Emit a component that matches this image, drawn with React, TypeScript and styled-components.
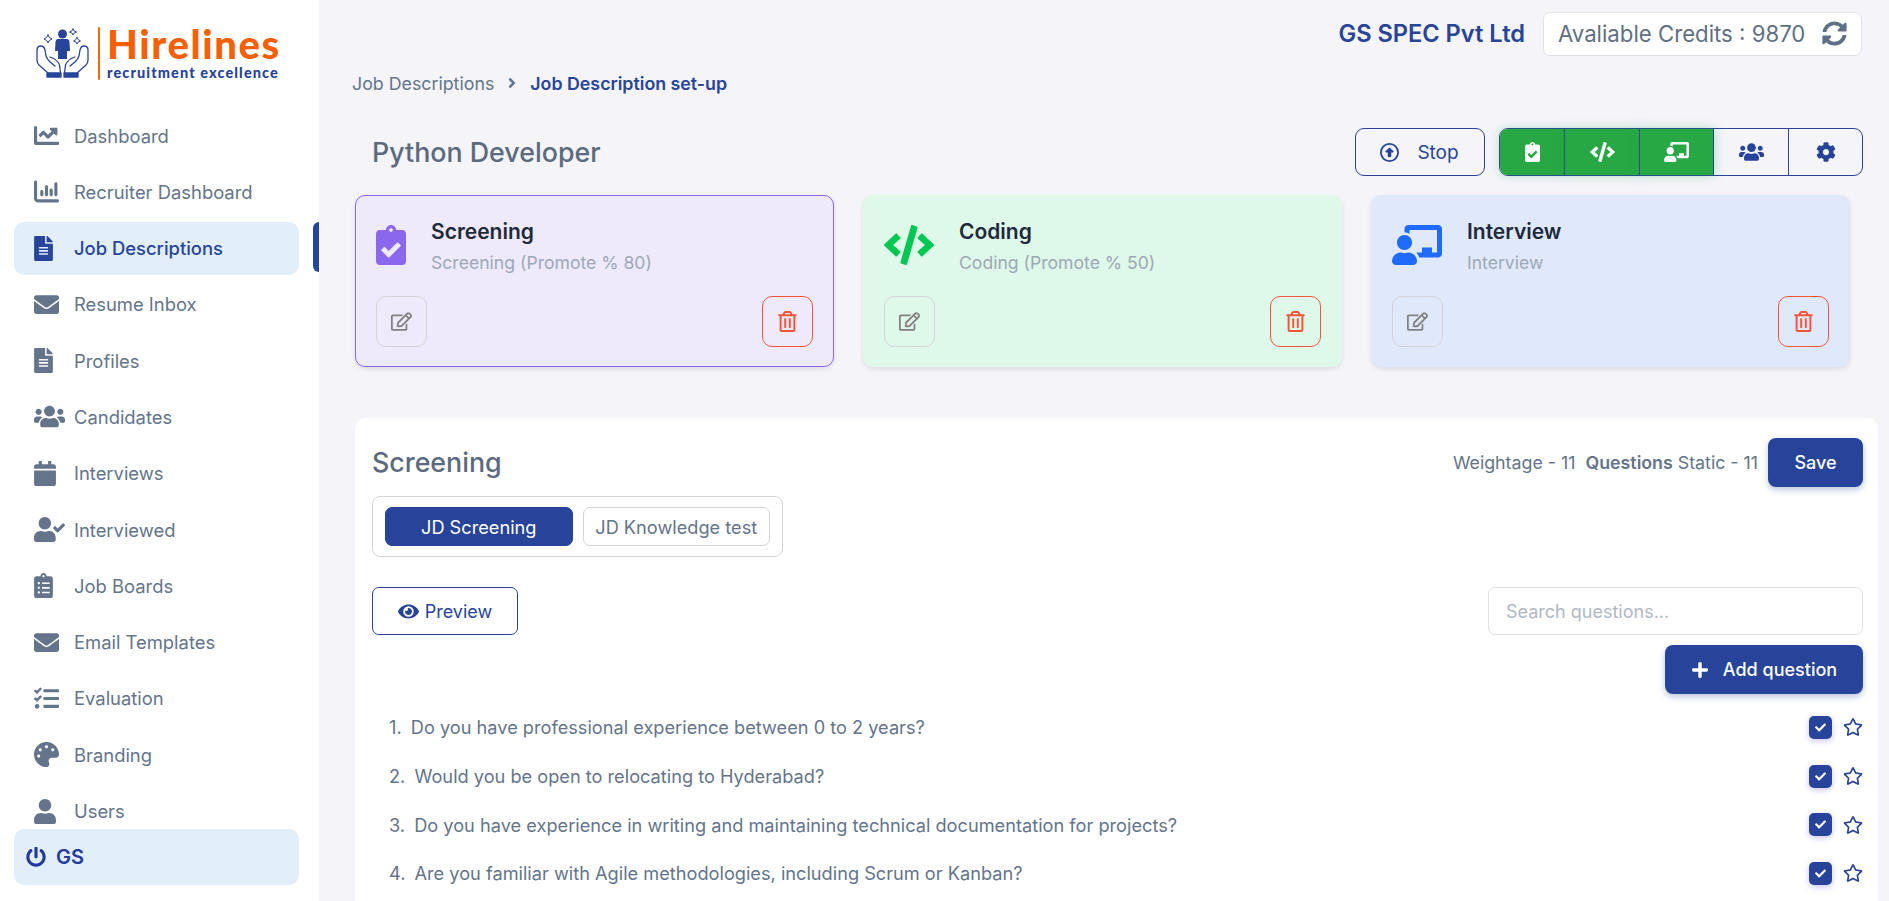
import React from "react";
import styled, { createGlobalStyle } from "styled-components";
import {
  FaChartLine, FaFileAlt, FaEnvelope, FaUsers, FaCalendar, FaUserCheck,
  FaClipboardList, FaTasks, FaPalette, FaUser, FaPowerOff, FaClipboardCheck, FaCode,
  FaChalkboardTeacher, FaCog, FaSyncAlt, FaEye, FaPlus, FaRegEdit, FaRegTrashAlt,
  FaRegStar, FaCheck, FaAngleRight,
} from "react-icons/fa";
import { FaChartColumn, FaRegCircleUp } from "react-icons/fa6";

const navy = "#27449a";
const slate = "#64748b";

const Global = createGlobalStyle`
  html, body { margin: 0; padding: 0; height: 100%; overflow: hidden; background: #f4f4f9; }
  * { box-sizing: border-box; }
  body { font-family: Inter, "Liberation Sans", sans-serif; color: ${slate}; }
  #root { height: 100%; }
`;

const Shell = styled.div`display: flex; height: 100vh; overflow: hidden;`;

const Sidebar = styled.aside`
  position: relative; width: 319px; flex: none; background: #fff;
  display: flex; flex-direction: column; padding-bottom: 16px;
`;
const LogoWrap = styled.div`
  height: 109px; flex: none; display: flex; align-items: flex-start; gap: 7px; padding: 24px 0 0 36px;
`;
const LogoRule = styled.div`width: 2px; height: 53px; margin: 3px 0 0 1px; background: #f76707; border-radius: 1px;`;
const LogoText = styled.div`display: flex; flex-direction: column; width: 174px;`;
const LogoName = styled.span`
  font-family: Lato, sans-serif; font-weight: 900; font-size: 40px; line-height: 40px; color: #f75f07; letter-spacing: 1.6px; white-space: nowrap;
`;
const LogoTag = styled.span`
  margin-top: 2px; font-family: Lato, sans-serif; font-weight: 900; font-size: 14.5px; line-height: 14px; color: ${navy}; letter-spacing: 1.1px; white-space: nowrap;
`;
const Nav = styled.nav`flex: 1; min-height: 0; overflow: hidden; display: flex; flex-direction: column; gap: 3.3px;`;
const NavItem = styled.a<{ $active?: boolean }>`
  flex: none; height: 53px; margin: 0 20px 0 14px; padding-left: 20px; border-radius: 10px;
  display: flex; align-items: center; font-size: 18.4px;
  color: ${(p) => (p.$active ? navy : slate)};
  font-weight: ${(p) => (p.$active ? 500 : 400)};
  background: ${(p) => (p.$active ? "#e2eefa" : "transparent")};
`;
const NavIconBox = styled.span<{ $w: number }>`
  width: 40px; flex: none; display: flex; align-items: center;
  svg { height: 25px; width: ${(p) => p.$w}px; flex: none; }
`;
const ActiveMark = styled.span`
  position: absolute; right: 0; top: 222px; width: 6px; height: 50px; background: ${navy}; border-radius: 6px 0 0 6px;
`;
const UserBox = styled.div`
  flex: none; height: 56px; margin: 0 20px 0 14px; padding-left: 12px; border-radius: 10px; background: #e2eefa;
  display: flex; align-items: center; gap: 10px; color: #2239a0; font-weight: 600; font-size: 20px;
  svg { width: 20px; height: 20px; }
`;

const Main = styled.main`flex: 1; min-width: 0; padding: 11px 11px 0 36px; display: flex; flex-direction: column;`;
const TopBar = styled.div`display: flex; justify-content: flex-end; align-items: center; gap: 18px; padding-right: 16px; height: 45px;`;
const Company = styled.span`font-size: 23.6px; font-weight: 600; color: ${navy};`;
const Credits = styled.div`
  width: 319px; height: 44px; padding: 0 14px; background: #fff; border: 1px solid #dfe2e8; border-radius: 7px;
  display: flex; align-items: center; justify-content: space-between; font-size: 22.2px; color: #5f6f84; white-space: nowrap;
  svg { width: 25px; height: 25px; color: #5f6f84; }
`;
const Crumbs = styled.div`
  display: flex; align-items: center; gap: 10px; margin: 14px 0 0 -3px; font-size: 17.8px; color: ${slate}; height: 26px;
  svg { width: 16px; height: 16px; }
  b { font-weight: 600; color: ${navy}; }
`;
const TitleRow = styled.div`
  display: flex; justify-content: space-between; align-items: center; height: 48px; margin-top: 32px; padding: 0 15px 0 17px;
`;
const PageTitle = styled.h1`margin: 0; font-size: 26.8px; font-weight: 500; color: #5b6a7e;`;
const TitleActions = styled.div`display: flex; gap: 14.5px;`;
const StopButton = styled.button`
  width: 130px; height: 48px; background: transparent; border: 1.5px solid ${navy}; border-radius: 9px; color: ${navy};
  font: 400 19px Inter, sans-serif; display: flex; align-items: center; justify-content: center; gap: 18px;
  svg { width: 19px; height: 19px; }
`;
const StageGroup = styled.div`
  display: grid; grid-template-columns: 65px 75px 74px 75px 73px; height: 48px; border: 1.5px solid ${navy}; border-radius: 9px;
`;
const StageSeg = styled.div<{ $on?: boolean; $first?: boolean; $last?: boolean; $w: number }>`
  display: flex; align-items: center; justify-content: center;
  border-right: ${(p) => (p.$last ? "none" : `1.5px solid ${navy}`)};
  background: ${(p) => (p.$on ? "#28a745" : "transparent")};
  color: ${(p) => (p.$on ? "#fff" : navy)};
  border-radius: ${(p) => (p.$first ? "8px 0 0 8px" : p.$last ? "0 8px 8px 0" : "0")};
  box-shadow: ${(p) => (p.$on ? "0 0 10px rgba(40,167,69,.35)" : "none")};
  svg { height: 20px; width: ${(p) => p.$w}px; }
`;
const CardRow = styled.div`
  display: grid; grid-template-columns: repeat(3, 1fr); column-gap: 29px; margin-top: 19px; padding-right: 28px;
`;
const StageCard = styled.div<{ $bg: string; $border?: string }>`
  height: 172px; padding: 20px 20px 19px; background: ${(p) => p.$bg}; border-radius: 10px;
  border: 1px solid ${(p) => p.$border || "transparent"};
  box-shadow: 0 2px 5px rgba(0,0,0,.1);
  display: flex; flex-direction: column; justify-content: space-between;
`;
const CardTop = styled.div<{ $c: string; $w: number }>`
  display: flex; gap: 25px; align-items: flex-start; padding-top: 2px;
  > svg { height: 40px; width: ${(p) => p.$w}px; color: ${(p) => p.$c}; flex: none; margin-top: 7px; }
`;
const CardTitle = styled.div`font-size: 21px; font-weight: 600; color: #1e293b; line-height: 28px;`;
const CardSub = styled.div`font-size: 17.6px; color: #9ca8b8; line-height: 24px; margin-top: 5px;`;
const CardFoot = styled.div`display: flex; justify-content: space-between;`;
const IconButton = styled.button<{ $danger?: boolean }>`
  width: 51px; height: 51px; padding: 0; background: transparent; border-radius: 10px;
  border: 1px solid ${(p) => (p.$danger ? "#f4553a" : "#d3d3d8")};
  color: ${(p) => (p.$danger ? "#f4553a" : "#808080")};
  display: flex; align-items: center; justify-content: center;
  svg { width: 21px; height: 21px; }
`;
const Panel = styled.section`
  margin-top: 51px; flex: 1; background: #fff; border-radius: 10px 10px 0 0; padding: 19px 15px 0 17px; overflow: hidden;
`;
const PanelHead = styled.div`display: flex; justify-content: space-between; align-items: center; height: 50px;`;
const PanelTitle = styled.h2`margin: 0; font-size: 26.8px; font-weight: 500; color: #5b6a7e;`;
const PanelMeta = styled.div`
  display: flex; align-items: center; font-size: 17.8px; color: ${slate}; gap: 10px;
  b { font-weight: 600; }
`;
const PrimaryButton = styled.button<{ $w: number }>`
  width: ${(p) => p.$w}px; height: 49px; background: ${navy}; border: none; border-radius: 8px; color: #fff;
  font: 500 18px Inter, sans-serif; display: flex; align-items: center; justify-content: center; gap: 14px;
  box-shadow: 0 3px 6px rgba(39,68,154,.3);
  svg { width: 18px; height: 18px; }
`;
const TabBox = styled.div`
  display: inline-flex; width: 411px; height: 61px; margin-top: 9px; padding: 10px 12px; gap: 10px;
  border: 1px solid #d4d4d8; border-radius: 8px;
`;
const Tab = styled.button<{ $on?: boolean }>`
  flex: 1; padding: 0; border-radius: 7px; border: 1px solid ${(p) => (p.$on ? navy : "#d4d4d8")};
  background: ${(p) => (p.$on ? navy : "#fff")}; color: ${(p) => (p.$on ? "#fff" : slate)};
  font: 400 18.2px Inter, sans-serif;
`;
const ToolRow = styled.div`display: flex; justify-content: space-between; margin-top: 30px;`;
const OutlineButton = styled.button`
  width: 146px; height: 48px; background: #fff; border: 1.5px solid ${navy}; border-radius: 7px; color: ${navy};
  font: 400 18px Inter, sans-serif; display: flex; align-items: center; justify-content: center; gap: 6px;
  svg { width: 21px; height: 21px; }
`;
const Search = styled.input`
  width: 375px; height: 48px; padding: 0 17px; border: 1px solid #dee2e6; border-radius: 7px; font: 400 18px Inter, sans-serif; color: ${slate};
  &::placeholder { color: #b0b8c4; }
`;
const AddRow = styled.div`display: flex; justify-content: flex-end; margin-top: 10px;`;
const QuestionList = styled.ol`list-style: none; margin: 9px 0 0; padding: 0;`;
const QuestionRow = styled.li`
  height: 48.7px; display: flex; align-items: center; justify-content: space-between; padding: 0 0 0 17px;
  font-size: 18.2px; color: ${slate};
`;
const QuestionNumber = styled.span`margin-right: 4px;`;
const RowMarks = styled.div`display: flex; align-items: center; gap: 11px; color: ${navy}; svg.star { width: 20px; height: 20px; }`;
const Tick = styled.span`
  width: 23px; height: 23px; background: ${navy}; border-radius: 5px; display: flex; align-items: center; justify-content: center; color: #fff;
  box-shadow: 0 2px 6px rgba(70,70,255,.3);
  svg { width: 11px; height: 11px; }
`;

const Logo = () => (
  <svg width="54" height="50" viewBox="0 0 54 50" style={{ marginTop: 4, flex: "none" }} fill="none" stroke={navy} strokeWidth="1.3" strokeLinejoin="round" strokeLinecap="round">
    <g>
      <path d="M12 45 L3 37 Q1 35 1 32 V22 Q1 18 5 18 Q8 18 9 22 L10 28 Q11 31 14 34 L19 38" />
      <path d="M14 29 Q21 31 23.5 37 L24.5 45" />
      <rect x="11" y="45" width="14" height="4" fill={navy} />
    </g>
    <g transform="translate(53 0) scale(-1 1)">
      <path d="M12 45 L3 37 Q1 35 1 32 V22 Q1 18 5 18 Q8 18 9 22 L10 28 Q11 31 14 34 L19 38" />
      <path d="M14 29 Q21 31 23.5 37 L24.5 45" />
      <rect x="11" y="45" width="14" height="4" fill={navy} />
    </g>
    <circle cx="26.5" cy="6" r="4.5" fill={navy} stroke="none" />
    <path d="M22 11 H31 Q33 11 33.5 14 L34 23 H31 V31 H22 V23 H19 L19.5 14 Q20 11 22 11 Z" fill={navy} stroke="none" />
    <path d="M12 7 Q12.5 10 16 11 Q12.5 12 12 15 Q11.5 12 8 11 Q11.5 10 12 7 Z" strokeWidth="1" />
    <path d="M37 1 Q37.5 3.5 40.5 4 Q37.5 4.5 37 7 Q36.5 4.5 33.5 4 Q36.5 3.5 37 1 Z" strokeWidth="1" />
    <path d="M41 9.5 Q41.5 12 44.5 13 Q41.5 13.5 41 16 Q40.5 13.5 37.5 13 Q40.5 12 41 9.5 Z" strokeWidth="1" />
  </svg>
);

const navItems: [React.ComponentType, string, number][] = [
  [FaChartLine, "Dashboard", 25],
  [FaChartColumn, "Recruiter Dashboard", 25],
  [FaFileAlt, "Job Descriptions", 19],
  [FaEnvelope, "Resume Inbox", 25],
  [FaFileAlt, "Profiles", 19],
  [FaUsers, "Candidates", 31],
  [FaCalendar, "Interviews", 22],
  [FaUserCheck, "Interviewed", 31],
  [FaClipboardList, "Job Boards", 19],
  [FaEnvelope, "Email Templates", 25],
  [FaTasks, "Evaluation", 25],
  [FaPalette, "Branding", 25],
  [FaUser, "Users", 22],
];

const stages = [
  { title: "Screening", sub: "Screening (Promote % 80)", Icon: FaClipboardCheck, w: 30, color: "#8b67ee", bg: "#efeafb", border: "#8b67ee" },
  { title: "Coding", sub: "Coding (Promote % 50)", Icon: FaCode, w: 50, color: "#00c853", bg: "#def9e9" },
  { title: "Interview", sub: "Interview", Icon: FaChalkboardTeacher, w: 50, color: "#1f6bff", bg: "#e0e9fb" },
];

const questions = [
  "Do you have professional experience between 0 to 2 years?",
  "Would you be open to relocating to Hyderabad?",
  "Do you have experience in writing and maintaining technical documentation for projects?",
  "Are you familiar with Agile methodologies, including Scrum or Kanban?",
];

export default function App() {
  return (
    <Shell>
      <Global />
      <Sidebar>
        <LogoWrap>
          <Logo />
          <LogoRule />
          <LogoText>
            <LogoName>Hirelines</LogoName>
            <LogoTag>recruitment excellence</LogoTag>
          </LogoText>
        </LogoWrap>
        <Nav>
          {navItems.map(([Icon, label, w]) => (
            <NavItem key={label} $active={label === "Job Descriptions"}>
              <NavIconBox $w={w}><Icon /></NavIconBox>
              {label}
            </NavItem>
          ))}
        </Nav>
        <ActiveMark />
        <UserBox><FaPowerOff />GS</UserBox>
      </Sidebar>
      <Main>
        <TopBar>
          <Company>GS SPEC Pvt Ltd</Company>
          <Credits>Avaliable Credits : 9870 <FaSyncAlt /></Credits>
        </TopBar>
        <Crumbs>Job Descriptions <FaAngleRight /> <b>Job Description set-up</b></Crumbs>
        <TitleRow>
          <PageTitle>Python Developer</PageTitle>
          <TitleActions>
            <StopButton><FaRegCircleUp />Stop</StopButton>
            <StageGroup>
              <StageSeg $on $first $w={15}><FaClipboardCheck /></StageSeg>
              <StageSeg $on $w={25}><FaCode /></StageSeg>
              <StageSeg $on $w={25}><FaChalkboardTeacher /></StageSeg>
              <StageSeg $w={25}><FaUsers /></StageSeg>
              <StageSeg $last $w={20}><FaCog /></StageSeg>
            </StageGroup>
          </TitleActions>
        </TitleRow>
        <CardRow>
          {stages.map(({ title, sub, Icon, w, color, bg, border }) => (
            <StageCard key={title} $bg={bg} $border={border}>
              <CardTop $c={color} $w={w}>
                <Icon />
                <div>
                  <CardTitle>{title}</CardTitle>
                  <CardSub>{sub}</CardSub>
                </div>
              </CardTop>
              <CardFoot>
                <IconButton><FaRegEdit /></IconButton>
                <IconButton $danger><FaRegTrashAlt /></IconButton>
              </CardFoot>
            </StageCard>
          ))}
        </CardRow>
        <Panel>
          <PanelHead>
            <PanelTitle>Screening</PanelTitle>
            <PanelMeta>
              <span>Weightage - 11&nbsp;&nbsp;<b>Questions</b> Static - 11</span>
              <PrimaryButton $w={95}>Save</PrimaryButton>
            </PanelMeta>
          </PanelHead>
          <TabBox>
            <Tab $on>JD Screening</Tab>
            <Tab>JD Knowledge test</Tab>
          </TabBox>
          <ToolRow>
            <OutlineButton><FaEye />Preview</OutlineButton>
            <Search placeholder="Search questions..." />
          </ToolRow>
          <AddRow>
            <PrimaryButton $w={198}><FaPlus />Add question</PrimaryButton>
          </AddRow>
          <QuestionList>
            {questions.map((q, i) => (
              <QuestionRow key={q}>
                <span><QuestionNumber>{i + 1}.</QuestionNumber> {q}</span>
                <RowMarks>
                  <Tick><FaCheck /></Tick>
                  <FaRegStar className="star" />
                </RowMarks>
              </QuestionRow>
            ))}
          </QuestionList>
        </Panel>
      </Main>
    </Shell>
  );
}
